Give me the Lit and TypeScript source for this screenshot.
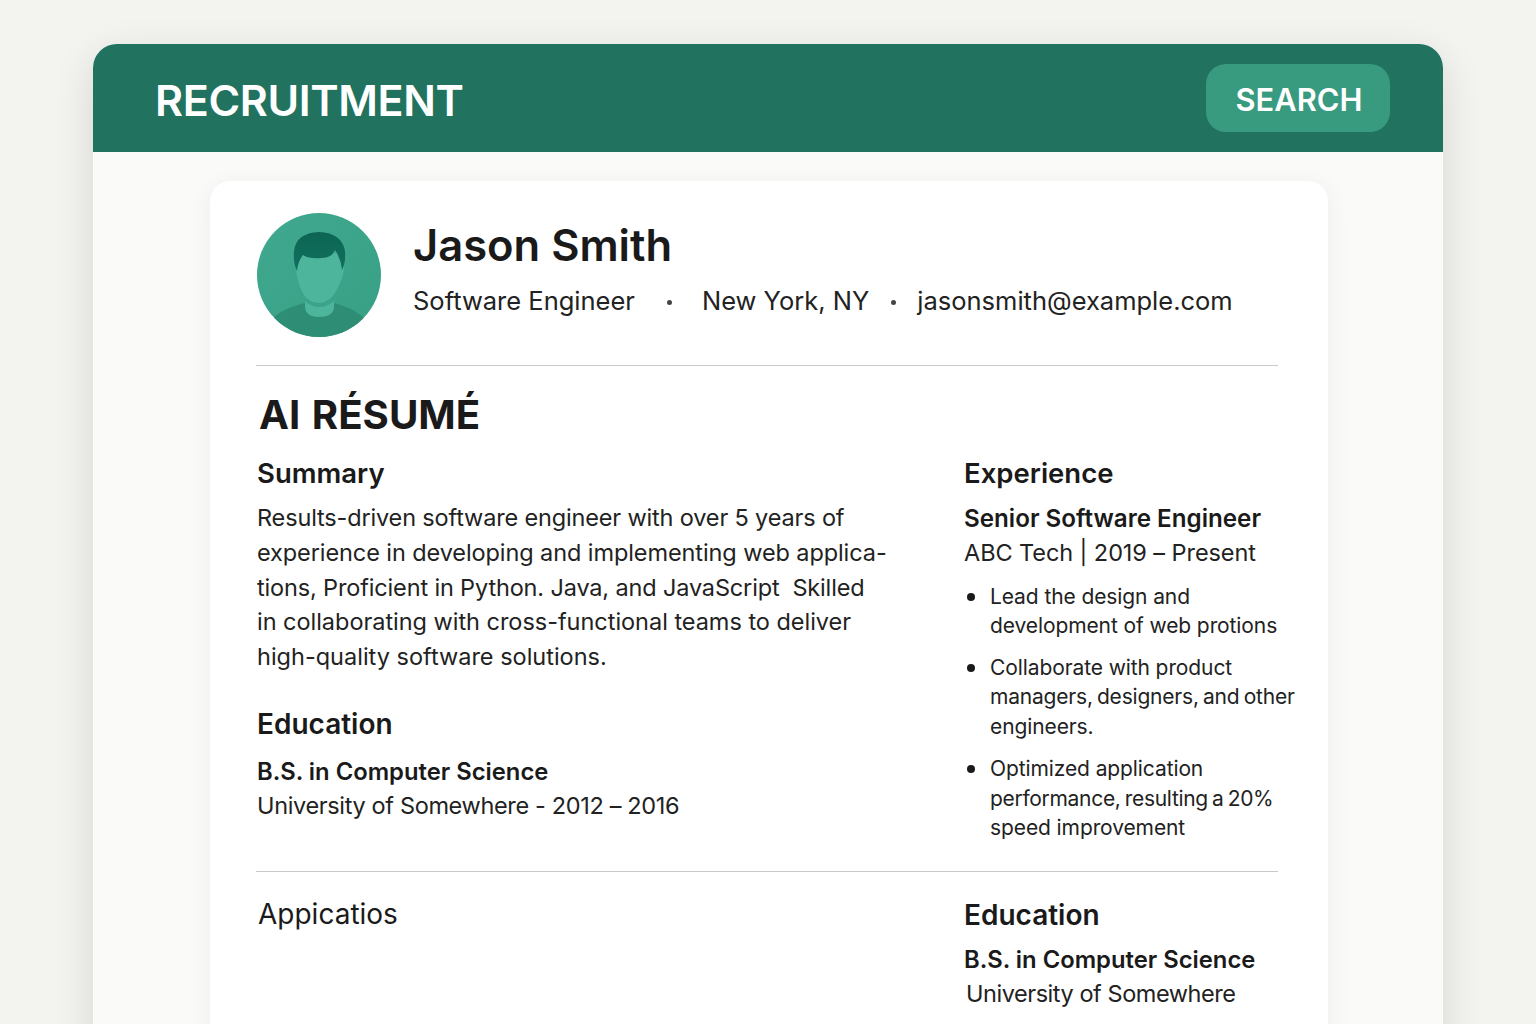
import { LitElement, html, css } from "lit";
import { customElement } from "lit/decorators.js";

@customElement("app-root")
export class AppRoot extends LitElement {
  static styles = css`
    :host {
      display: block;
      height: 1024px;
      overflow: hidden;
      background: #f3f3f0;
      font-family: Inter, "Liberation Sans", sans-serif;
      color: #1a1a1a;
      padding: 44px 93px 0;
      box-sizing: border-box;
    }
    .shell {
      height: 1100px;
      background: #fafaf8;
      border-radius: 24px 24px 0 0;
      box-shadow: 0 12px 40px rgba(0, 0, 0, 0.12);
    }
    .top {
      height: 108px;
      box-sizing: border-box;
      background: #227260;
      border-radius: 24px 24px 0 0;
      display: flex;
      align-items: center;
      justify-content: space-between;
      padding: 0 53px 0 62px;
      color: #fff;
    }
    .brand { font-size: 43px; font-weight: 600; letter-spacing: -0.35px; padding-top: 4px; }
    .search {
      width: 184px;
      height: 68px;
      border-radius: 20px;
      background: #389a7f;
      display: flex;
      align-items: center;
      justify-content: center;
      font-size: 30.8px;
      font-weight: 600;
      padding: 2px 0 0 2px;
      box-sizing: border-box;
    }
    .body { padding: 29px 115px 0 117px; }
    .card {
      background: #fff;
      border-radius: 20px;
      box-shadow: 0 4px 24px rgba(0, 0, 0, 0.06);
      padding: 32px 50px 0 46px;
      height: 900px;
      box-sizing: border-box;
    }
    .head { display: flex; gap: 31px; padding-left: 1px; height: 153px; box-sizing: border-box; border-bottom: 1px solid #c9c9c6; }
    .avatar { width: 124px; height: 124px; flex: none; }
    .who { padding-left: 1px; }
    .name { font-size: 43.5px; font-weight: 600; line-height: 54px; margin-top: 5px; }
    .meta { display: flex; font-size: 25.5px; line-height: 36px; margin-top: 11px; color: #222; }
    .dot { width: 5px; height: 5px; border-radius: 50%; background: #444; align-self: center; }
    .dot.a { margin: 2px 30px 0 32px; }
    .dot.b { margin: 2px 21px 0 22px; }
    h1 { font-size: 40.2px; font-weight: 700; word-spacing: 2px; line-height: 50px; margin: 24px 0 0 3px; }
    .cols { display: grid; grid-template-columns: 707px 1fr; padding-left: 1px; margin-top: 16px; }
    h2 { font-size: 27.5px; font-weight: 600; line-height: 34px; margin: 0; }
    .edu h2, .right2 h2 { font-size: 28px; }
    p { margin: 0; }
    .text { font-size: 23.5px; letter-spacing: -0.08px; line-height: 34.8px; color: #222; }
    .text.sm { letter-spacing: -0.35px; }
    .right2 .text.sm { letter-spacing: -0.45px; }
    .l1 { letter-spacing: -0.16px; }
    .l2 { letter-spacing: -0.09px; }
    .l3 { letter-spacing: -0.15px; }
    .l4 { letter-spacing: -0.03px; }
    .l5 { letter-spacing: 0; }
    .summary { margin-top: 11px; }
    .edu { margin-top: 32px; }
    h3 { font-size: 23.8px; font-weight: 600; line-height: 35px; margin: 0; }
    .job h3 { font-size: 24.2px; }
    .edu h3 { margin-top: 13px; }
    .job { margin-top: 11px; }
    ul { list-style: none; margin: 0; padding: 0; }
    li {
      position: relative;
      padding-left: 26px;
      font-size: 21px;
      letter-spacing: -0.1px;
      line-height: 29.5px;
      color: #222;
      margin-top: 12px;
      white-space: nowrap;
    }
    li:first-child { margin-top: 11px; }
    li:last-child { margin-top: 13px; }
    .tight { word-spacing: -1.5px; letter-spacing: -0.2px; }
    .tighter { word-spacing: -1.5px; letter-spacing: -0.3px; }
    li::before {
      content: "";
      position: absolute;
      left: 3px;
      top: 11px;
      width: 8px;
      height: 8px;
      border-radius: 50%;
      background: #1a1a1a;
    }
    .rule { height: 1px; background: #c9c9c6; margin-top: 28px; }
    .apps { font-size: 28px; font-weight: 400; line-height: 34px; margin: 25px 0 0 1px; }
    .cols2 { display: grid; grid-template-columns: 707px 1fr; padding-left: 1px; }
    .right2 { margin-top: 26px; }
    .right2 h3 { margin-top: 10px; }
    .right2 .text { margin-left: 2px; }
  `;

  render() {
    return html`
      <div class="shell">
        <div class="top">
          <div class="brand">RECRUITMENT</div>
          <div class="search">SEARCH</div>
        </div>
        <div class="body">
          <div class="card">
            <div class="head">
              <svg class="avatar" viewBox="0 0 124 124">
                <defs>
                  <clipPath id="c"><circle cx="62" cy="62" r="62" /></clipPath>
                  <linearGradient id="hair" x1="0" y1="0" x2="0" y2="1">
                    <stop offset="0" stop-color="#0c6553" />
                    <stop offset="1" stop-color="#12705e" />
                  </linearGradient>
                  <linearGradient id="bg" x1="0" y1="0" x2="1" y2="1">
                    <stop offset="0" stop-color="#40a88e" />
                    <stop offset="1" stop-color="#37a085" />
                  </linearGradient>
                </defs>
                <g clip-path="url(#c)">
                  <rect width="124" height="124" fill="url(#bg)" />
                  <path d="M18 103 Q30 94 48 90 H77 Q94 94 106 104 L124 130 H0 Z" fill="#2e8d75" />
                  <path d="M48 78 H77 V93 Q77 104 62 104 Q48 104 48 93 Z" fill="#4db59c" />
                  <path d="M48 80 H77 V88 Q70 94 62 94 Q54 94 48 88 Z" fill="#3ca38a" />
                  <path d="M38 40 H88 Q88 60 83 70 Q75 90 62 90 Q49 90 43 74 Q38 62 38 40 Z" fill="#4db59c" />
                  <path d="M40 58 Q36 50 37 38 Q39 20 62 19 Q85 20 88 38 Q89 50 85 57 Q84 46 78 37 Q75 45 64 45 Q52 46 46 42 Q41 48 40 58 Z" fill="url(#hair)" />
                </g>
              </svg>
              <div class="who">
                <div class="name">Jason Smith</div>
                <div class="meta">
                  <span>Software Engineer</span><span class="dot a"></span
                  ><span>New York, NY</span><span class="dot b"></span
                  ><span>jasonsmith@example.com</span>
                </div>
              </div>
            </div>
            <h1>AI RÉSUMÉ</h1>
            <div class="cols">
              <div>
                <h2>Summary</h2>
                <p class="text summary">
                  <span class="l1">Results-driven software engineer with over 5 years of</span><br />
                  <span class="l2">experience in developing and implementing web applica-</span><br />
                  <span class="l3">tions, Proficient in Python. Java, and JavaScript&nbsp; Skilled</span><br />
                  <span class="l4">in collaborating with cross-functional teams to deliver</span><br />
                  <span class="l5">high-quality software solutions.</span>
                </p>
                <div class="edu">
                  <h2>Education</h2>
                  <h3>B.S. in Computer Science</h3>
                  <p class="text sm">University of Somewhere - 2012 – 2016</p>
                </div>
              </div>
              <div>
                <h2>Experience</h2>
                <div class="job">
                  <h3>Senior Software Engineer</h3>
                  <p class="text">ABC Tech | 2019 – Present</p>
                </div>
                <ul>
                  <li>Lead the design and<br />development of web protions</li>
                  <li>Collaborate with product<br /><span class="tight">managers, designers, and other</span><br />engineers.</li>
                  <li>Optimized application<br /><span class="tighter">performance, resulting a 20%</span><br />speed improvement</li>
                </ul>
              </div>
            </div>
            <div class="rule"></div>
            <div class="cols2">
              <div class="apps">Appicatios</div>
              <div class="right2">
                <h2>Education</h2>
                <h3>B.S. in Computer Science</h3>
                <p class="text sm">University of Somewhere</p>
              </div>
            </div>
          </div>
        </div>
      </div>
    `;
  }
}
